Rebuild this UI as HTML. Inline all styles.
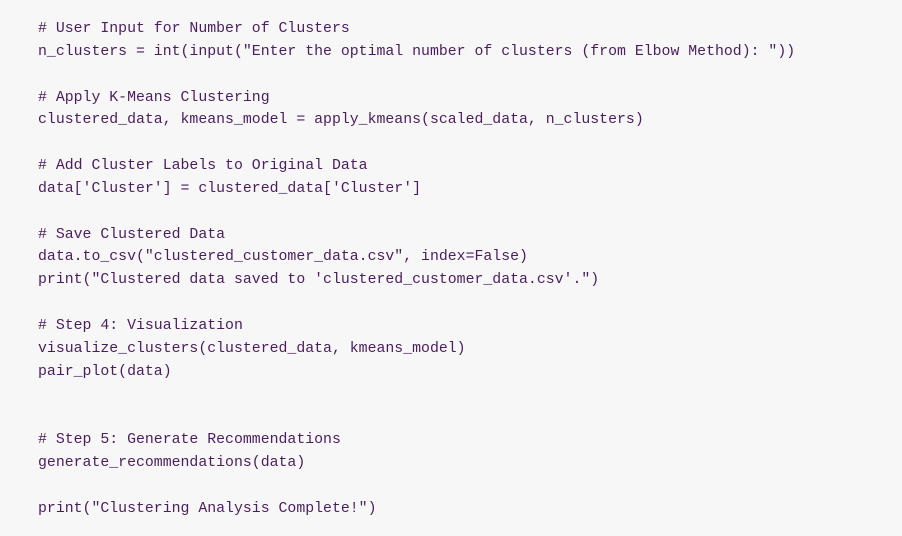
<!DOCTYPE html>
<html><head><meta charset="utf-8"><style>
html,body{margin:0;padding:0;width:902px;height:536px;background:#f7f7f7;overflow:hidden}
pre{margin:0;position:absolute;left:38px;top:18px;font-family:"Liberation Mono",monospace;font-size:14.85px;line-height:22.85px;color:#4a1e5c}
</style></head><body>
<pre># User Input for Number of Clusters
n_clusters = int(input("Enter the optimal number of clusters (from Elbow Method): "))

# Apply K-Means Clustering
clustered_data, kmeans_model = apply_kmeans(scaled_data, n_clusters)

# Add Cluster Labels to Original Data
data['Cluster'] = clustered_data['Cluster']

# Save Clustered Data
data.to_csv("clustered_customer_data.csv", index=False)
print("Clustered data saved to 'clustered_customer_data.csv'.")

# Step 4: Visualization
visualize_clusters(clustered_data, kmeans_model)
pair_plot(data)


# Step 5: Generate Recommendations
generate_recommendations(data)

print("Clustering Analysis Complete!")</pre>
</body></html>
